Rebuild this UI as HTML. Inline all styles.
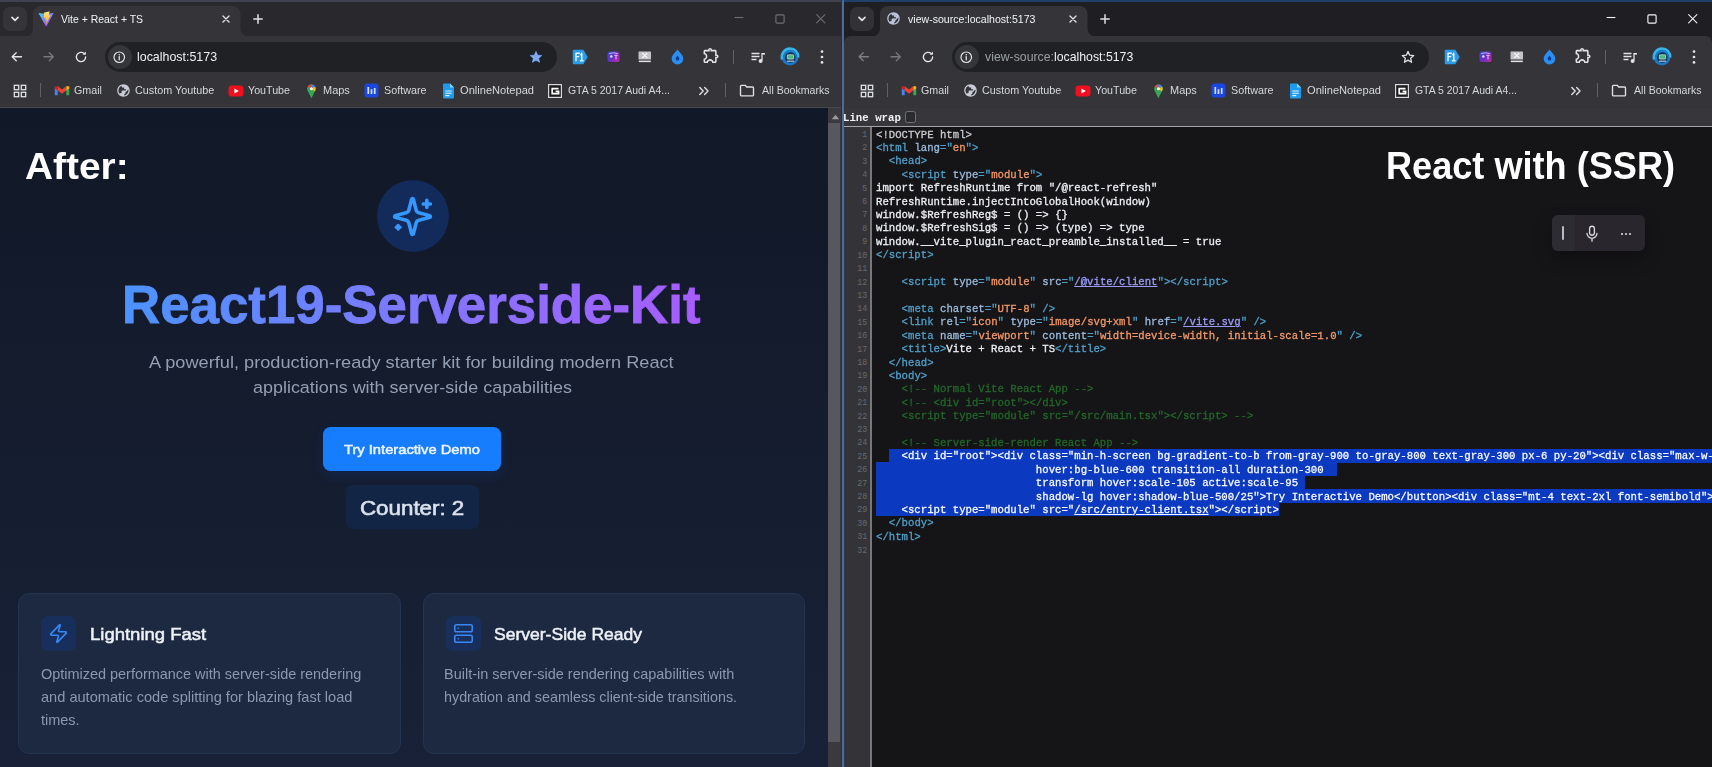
<!DOCTYPE html>
<html lang="en">
<head>
<meta charset="utf-8">
<title>React19-Serverside-Kit – SSR view-source comparison</title>
<style>
*{margin:0;padding:0;box-sizing:border-box}
html,body{width:1712px;height:767px;overflow:hidden;background:#202124}
body{font-family:"Liberation Sans",sans-serif;-webkit-font-smoothing:antialiased}
#root{position:relative;width:1712px;height:767px;overflow:hidden}
.b,.i,.t{position:absolute}
.i{display:block;overflow:visible}
.t{white-space:pre;transform-origin:0 50%;display:block}
.mo{font-family:"Liberation Mono",monospace}
.cl,.ln{position:absolute;white-space:pre;font-family:"Liberation Mono",monospace;height:13.41px;line-height:13.41px}
.cl{will-change:transform;-webkit-text-stroke:.3px;left:875.8px;font-size:10.667px;color:#eceef2;width:836.2px;overflow:hidden}
.ln{left:844px;width:23.3px;text-align:right;font-size:8.3px;color:#68696e;line-height:15.6px}
.tg{color:#509fc8}.an{color:#9bbbdc}.av{color:#f29766}.lk{color:#9a9cf8;text-decoration:underline}
.cm{color:#22672a}.dt{color:#c9cacd}.se{color:#f6f8ff}

</style>
</head>
<body>
<div id="root">
<div class="b" style="left:0px;top:0px;width:842px;height:36px;background:#29282c;"></div>
<div class="b" style="left:0px;top:0px;width:842px;height:2.3px;background:#40424f;"></div>
<div class="b" style="left:0px;top:35.5px;width:842px;height:72.5px;background:#353539;"></div>
<div class="b" style="left:2.5px;top:6.8px;width:24px;height:24.4px;background:#353438;border-radius:7px"></div>
<svg class="i" style="left:8.60px;top:12.50px" width="12" height="12" viewBox="0 0 12 12" ><path d="M3 4.400 6 7.400 9 4.400" fill="none" stroke="#e3e3e3" stroke-width="1.7" stroke-linecap="round" stroke-linejoin="round"/></svg>
<svg class="i" style="left:24.5px;top:5.500px" width="223.5" height="30.500" viewBox="0 0 223.5 30.500"><path d="M0 30.500a8 8 0 0 0 8-8V8a8 8 0 0 1 8-8h191.500a8 8 0 0 1 8 8v14.500a8 8 0 0 0 8 8z" fill="#353539"/></svg>
<svg class="i" style="left:38.00px;top:10.50px" width="16" height="16" viewBox="0 0 16 16" ><defs><linearGradient id="vg1" x1="0" y1="0" x2="1" y2="1"><stop offset="0" stop-color="#41d1ff"/><stop offset="1" stop-color="#bd34fe"/></linearGradient><linearGradient id="vg2" x1="0" y1="0" x2="0" y2="1"><stop offset="0" stop-color="#ffea83"/><stop offset="1" stop-color="#ffa800"/></linearGradient></defs><path d="M15.4 2.6 8.6 15a.5.5 0 0 1-.9 0L.7 2.6c-.2-.4.1-.8.5-.7l6.9 1.2h.2l6.7-1.2c.4-.1.7.3.4.7z" fill="url(#vg1)"/><path d="M11.3.4 6.300 1.400a.2.2 0 0 0-.15.17l-.3 5.300c0 .13.1.23.23.2l1.400-.33c.14-.03.260.09.230.23l-.420 2.070c-.03.140.100.260.24.220l.880-.270c.140-.04.270.08.240.22l-.670 3.240c-.04.2.230.310.340.140l.080-.120 4.170-8.320c.07-.14-.05-.3-.2-.27l-1.470.28c-.14.030-.260-.100-.220-.240l.960-3.320c.040-.140-.080-.270-.220-.240z" fill="url(#vg2)"/></svg>
<span class="t" style="left:61.25px;top:11.53px;font-size:10.6px;line-height:15px;color:#f1f3f4;transform:scaleX(0.9857);">Vite + React + TS</span>
<svg class="i" style="left:220.50px;top:13.50px" width="10" height="10" viewBox="0 0 10 10" ><path d="M2 2 8 8M8 2 2 8" fill="none" stroke="#dfe1e5" stroke-width="1.4" stroke-linecap="round"/></svg>
<svg class="i" style="left:250.50px;top:11.50px" width="14" height="14" viewBox="0 0 14 14" ><path d="M7 2.800V11.200M2.800 7H11.200" fill="none" stroke="#dfe1e5" stroke-width="1.500" stroke-linecap="round"/></svg>
<svg class="i" style="left:733.30px;top:11.30px" width="12" height="12" viewBox="0 0 12 12" ><path d="M1.600 6.500H10.400" stroke="#6e6f74" stroke-width="1.100"/></svg>
<svg class="i" style="left:774.00px;top:12.50px" width="12" height="12" viewBox="0 0 12 12" ><rect x="1.900" y="1.900" width="8.200" height="8.200" rx="1" fill="none" stroke="#6e6f74" stroke-width="1.150"/></svg>
<svg class="i" style="left:815.25px;top:12.75px" width="11.5" height="11.5" viewBox="0 0 14 14" ><path d="M2 2 12 12M12 2 2 12" stroke="#6e6f74" stroke-width="1.3" stroke-linecap="round"/></svg>
<svg class="i" style="left:10.25px;top:50.25px" width="13.5" height="13.5" viewBox="0 0 16 16" ><path d="M13.6 8H3M7.4 3.2 2.600 8l4.800 4.800" fill="none" stroke="#e3e5e8" stroke-width="1.600" stroke-linecap="round" stroke-linejoin="round"/></svg>
<svg class="i" style="left:41.75px;top:50.25px" width="13.5" height="13.5" viewBox="0 0 16 16" ><path d="M2.400 8H13M8.600 3.2 13.400 8l-4.800 4.800" fill="none" stroke="#77797e" stroke-width="1.600" stroke-linecap="round" stroke-linejoin="round"/></svg>
<svg class="i" style="left:74.00px;top:50.00px" width="14" height="14" viewBox="0 0 16 16" ><path d="M13.300 8a5.300 5.300 0 1 1-1.700-3.900" fill="none" stroke="#e3e5e8" stroke-width="1.600" stroke-linecap="round"/><path d="M13.600 1.800v3.700H9.900z" fill="#e3e5e8"/></svg>
<div class="b" style="left:105px;top:42px;width:452px;height:30px;background:#202124;border-radius:15px"></div>
<div class="b" style="left:108px;top:45px;width:24px;height:24px;background:#35363a;border-radius:12px"></div>
<svg class="i" style="left:111.75px;top:49.75px" width="14.5" height="14.5" viewBox="0 0 16 16" ><circle cx="8" cy="8" r="5.800" fill="none" stroke="#e3e5e8" stroke-width="1.300"/><path d="M8 7.300v3.500" stroke="#e3e5e8" stroke-width="1.400" stroke-linecap="round"/><circle cx="8" cy="5.200" r=".85" fill="#e3e5e8"/></svg>
<span class="t" style="left:136.96px;top:48.50px;font-size:12.4px;line-height:17px;color:#eef0f2;transform:scaleX(1.0022);">localhost:5173</span>
<svg class="i" style="left:528.80px;top:49.80px" width="14" height="14" viewBox="0 0 16 16" ><path d="M8 1.600 9.900 5.900l4.700.45-3.550 3.100 1.050 4.600L8 11.600l-4.100 2.450 1.050-4.600L1.400 6.350l4.700-.45z" fill="#7cacf8" stroke="#7cacf8" stroke-width=".8" stroke-linejoin="round"/></svg>
<svg class="i" style="left:571.80px;top:48.50px" width="16" height="16" viewBox="0 0 16 16" ><path d="M1.500 1.500h9.300l4 6.500-4 6.500H1.500z" fill="#2c9be6" stroke="#2c9be6" stroke-width="1.500" stroke-linejoin="round"/><path d="M4 4.300h3.300M4 7.600h2.700M4 4.300v7.400M9.800 4.300v7.400M8.500 11.700h2.600M8.700 5.800l1.100-1.500" fill="none" stroke="#e9f5ff" stroke-width="1.400" stroke-linecap="round"/></svg>
<svg class="i" style="left:607.00px;top:50.75px" width="13" height="11.5" viewBox="0 0 13 11.500" ><defs><linearGradient id="pg" x1="0" y1="0" x2="1" y2=".8"><stop offset="0" stop-color="#3553d6"/><stop offset=".55" stop-color="#6b2fc4"/><stop offset="1" stop-color="#b32aa6"/></linearGradient></defs><rect x=".5" y=".5" width="12" height="10.500" rx="2.600" fill="url(#pg)"/><path d="M2.200 2.600Q6.500 .9 10.800 2.600" fill="none" stroke="#c9c4f0" stroke-width=".9"/><circle cx="4.300" cy="5.500" r="1.300" fill="#dcd8ff"/><path d="M7.300 4.300h3.400M9 4.300v4.200" stroke="#e9a6e0" stroke-width="1.200"/></svg>
<svg class="i" style="left:638.45px;top:51.05px" width="13.5" height="11.5" viewBox="0 0 13.500 11.500" ><rect x=".5" y=".5" width="12.500" height="8" rx=".6" fill="#c3c4c8"/><path d="M4.300 1.800l5 5.200M9.300 1.800l-5 5.200" stroke="#fafafa" stroke-width="1.100"/><rect x=".8" y="9.600" width="12" height="1.500" fill="#e6e7ea"/></svg>
<svg class="i" style="left:671.10px;top:49.20px" width="13" height="16" viewBox="0 0 13 16" ><path d="M6.500 .5C4 3.700 .7 6.300 .7 9.700a5.800 5.800 0 0 0 11.600 0C12.300 6.300 9 3.700 6.500 .5z" fill="#2a8ff0"/><path d="M6.500 6.500c-1 1.300-1.900 2.100-1.900 3.200a1.900 1.900 0 0 0 3.800 0c0-1.100-.9-1.900-1.900-3.200z" fill="#0f3f9a"/></svg>
<svg class="i" style="left:701.55px;top:46.35px" width="18.5" height="18.5" viewBox="0 0 24 24" ><path d="M10.5 4.500c.28 0 .5.220.5.5v2h6v6h2c.28 0 .5.220.5.5s-.220.5-.5.5h-2v6h-2.120c-.68-1.750-2.390-3-4.380-3s-3.700 1.250-4.380 3H4v-2.120c1.750-.68 3-2.390 3-4.380 0-1.990-1.240-3.700-2.990-4.380L4 7h6V5c0-.28.220-.5.5-.5m0-2C9.120 2.500 8 3.620 8 5H4c-1.100 0-1.990.9-1.990 2v3.800h.29c1.490 0 2.700 1.210 2.700 2.700s-1.210 2.700-2.700 2.700H2V20c0 1.100.9 2 2 2h3.800v-.3c0-1.490 1.210-2.700 2.700-2.700s2.700 1.210 2.700 2.700v.3H17c1.100 0 2-.9 2-2v-4c1.380 0 2.500-1.120 2.500-2.500S20.380 11 19 11V7c0-1.100-.9-2-2-2h-4c0-1.380-1.120-2.500-2.500-2.500z" fill="#e3e3e3" fill-rule="evenodd"/></svg>
<div class="b" style="left:733px;top:50px;width:1.3px;height:14px;background:#5f6166;"></div>
<svg class="i" style="left:749.50px;top:49.50px" width="16" height="14" viewBox="0 0 16 14" ><path d="M1.500 3.500h8M1.500 6.500h8M1.500 9.500h5" stroke="#e3e3e3" stroke-width="1.400"/><path d="M12 3v7.300" stroke="#e3e3e3" stroke-width="1.300"/><path d="M12 3h3v1.600h-3z" fill="#e3e3e3"/><circle cx="10.600" cy="10.900" r="2" fill="#e3e3e3"/></svg>
<svg class="i" style="left:781.20px;top:47.80px" width="18" height="18" viewBox="0 0 18 18" ><circle cx="9" cy="9" r="8.500" fill="#1b78c9"/><path d="M1.200 11.500A8.300 8.300 0 0 1 9 .5a8.300 8.300 0 0 1 8.300 9" fill="none" stroke="#35b5e8" stroke-width="2.400"/><circle cx="9.300" cy="9.500" r="5.300" fill="#0e2f4d"/><rect x="6.300" y="6.800" width="6.400" height="4.300" rx=".6" fill="#49b87d" stroke="#d9e9f0" stroke-width=".7"/><path d="M6 13.200h7.200" stroke="#c9d6dd" stroke-width="1.100"/></svg>
<svg class="i" style="left:819.00px;top:49.00px" width="6" height="16" viewBox="0 0 6 16" ><circle cx="3" cy="2.600" r="1.350" fill="#e3e3e3"/><circle cx="3" cy="8" r="1.350" fill="#e3e3e3"/><circle cx="3" cy="13.400" r="1.350" fill="#e3e3e3"/></svg>
<svg class="i" style="left:13.00px;top:83.50px" width="14" height="14" viewBox="0 0 14 14" ><rect x="1.3" y="1.3" width="4.400" height="4.400" fill="none" stroke="#dfe1e5" stroke-width="1.300"/><rect x="1.3" y="8.3" width="4.400" height="4.400" fill="none" stroke="#dfe1e5" stroke-width="1.300"/><rect x="8.3" y="1.3" width="4.400" height="4.400" fill="none" stroke="#dfe1e5" stroke-width="1.300"/><rect x="8.3" y="8.3" width="4.400" height="4.400" fill="none" stroke="#dfe1e5" stroke-width="1.300"/></svg>
<div class="b" style="left:40px;top:83px;width:1.2px;height:14px;background:#5f6166;"></div>
<svg class="i" style="left:53.50px;top:84.00px" width="16" height="13" viewBox="0 0 16 13" ><path d="M.8 2.600v8.600h2.900V5.400z" fill="#4285f4"/><path d="M15.200 2.600v8.600h-2.900V5.400z" fill="#34a853"/><path d="M12.300 1.900 15.200 2.600v1.900l-2.900 2.100z" fill="#fbbc04"/><path d="M3.700 1.900.8 2.600v1.900l2.900 2.100z" fill="#c5221f"/><path d="M3.700 6.400V2.300L8 5.600l4.300-3.300v4.100L8 9.700z" fill="#ea4335"/></svg>
<span class="t" style="left:73.76px;top:82.86px;font-size:10.5px;line-height:15px;color:#d5d8dd;transform:scaleX(1.0195);">Gmail</span>
<svg class="i" style="left:115.70px;top:83.00px" width="15" height="15" viewBox="0 0 24 24" ><path transform="translate(24 0) scale(-1 1)" d="M12 2C6.480 2 2 6.480 2 12s4.480 10 10 10 10-4.480 10-10S17.520 2 12 2zm-1 17.930c-3.950-.490-7-3.850-7-7.930 0-.620.080-1.210.210-1.790L9 15v1c0 1.100.9 2 2 2v1.930zm6.900-2.540c-.260-.810-1-1.390-1.900-1.390h-1v-3c0-.550-.450-1-1-1H8v-2h2c.550 0 1-.450 1-1V7h2c1.100 0 2-.9 2-2v-.410c2.930 1.190 5 4.060 5 7.410 0 2.080-.8 3.970-2.100 5.390z" fill="#c9ccd6"/></svg>
<span class="t" style="left:135.05px;top:82.86px;font-size:10.5px;line-height:15px;color:#d5d8dd;transform:scaleX(1.0282);">Custom Youtube</span>
<svg class="i" style="left:227.50px;top:84.50px" width="16" height="12" viewBox="0 0 16 12" ><rect x=".5" y=".5" width="15" height="11" rx="3.200" fill="#f00f1f"/><path d="M6.400 3.400v5.200L10.800 6z" fill="#fff"/></svg>
<span class="t" style="left:247.77px;top:82.86px;font-size:10.5px;line-height:15px;color:#d5d8dd;transform:scaleX(1.0181);">YouTube</span>
<svg class="i" style="left:304.60px;top:83.60px" width="12.8" height="14.6" viewBox="0 0 14 16" ><path d="M7 .5A4.700 4.700 0 0 0 2.300 5.200c0 1.200.4 2.100 1 3L7 15.500l3.700-7.300c.6-.9 1-1.800 1-3A4.700 4.700 0 0 0 7 .5z" fill="#34a853"/><path d="M7 .5A4.700 4.700 0 0 0 2.800 3.100L7 5.200z" fill="#ea4335"/><path d="M7 .5v4.700l4.200-2.100A4.700 4.700 0 0 0 7 .5z" fill="#4285f4"/><path d="M11.200 3.100 7 5.200l3.700 3c.6-.9 1-1.800 1-3 0-.8-.2-1.500-.5-2.100z" fill="#fbbc04"/><circle cx="7" cy="5.200" r="1.700" fill="#fff"/></svg>
<span class="t" style="left:323.40px;top:82.86px;font-size:10.5px;line-height:15px;color:#d5d8dd;transform:scaleX(1.0436);">Maps</span>
<svg class="i" style="left:364.00px;top:83.00px" width="15" height="15" viewBox="0 0 15 15" ><rect x=".5" y=".5" width="14" height="14" rx="3" fill="#1c46e0"/><path d="M4.300 4v7M7.500 6.300V11M10.700 5V11" stroke="#cfe0ff" stroke-width="1.700"/></svg>
<span class="t" style="left:384.01px;top:82.86px;font-size:10.5px;line-height:15px;color:#d5d8dd;transform:scaleX(1.0249);">Software</span>
<svg class="i" style="left:441.50px;top:82.50px" width="13" height="16" viewBox="0 0 13 16" ><path d="M1 1.500A1 1 0 0 1 2 .5h6l4 4v10a1 1 0 0 1-1 1H2a1 1 0 0 1-1-1z" fill="#1d9bf0"/><path d="M8 .5v4h4z" fill="#8fd0ff"/><path d="M3.300 8h6.400M3.300 10.300h6.400M3.300 12.600h4" stroke="#e6f5ff" stroke-width="1.100"/></svg>
<span class="t" style="left:459.97px;top:82.86px;font-size:10.5px;line-height:15px;color:#d5d8dd;transform:scaleX(1.0570);">OnlineNotepad</span>
<svg class="i" style="left:548.30px;top:83.50px" width="14" height="14" viewBox="0 0 14 14" ><rect x=".6" y=".6" width="12.800" height="12.800" fill="#1b1b1d" stroke="#d9d9d9" stroke-width="1.200"/><path d="M10.600 4.600H4.200v5h6.400V7.300H7.600" fill="none" stroke="#fff" stroke-width="1.700"/></svg>
<span class="t" style="left:567.77px;top:82.86px;font-size:10.5px;line-height:15px;color:#d5d8dd;transform:scaleX(0.9942);">GTA 5 2017 Audi A4...</span>
<svg class="i" style="left:698.00px;top:85.80px" width="12" height="10" viewBox="0 0 12 10" ><path d="M1.800 1.500 5.200 5 1.800 8.500M6.600 1.500 10 5 6.600 8.500" fill="none" stroke="#dfe1e5" stroke-width="1.400" stroke-linecap="round" stroke-linejoin="round"/></svg>
<div class="b" style="left:724.5px;top:83px;width:1.2px;height:14px;background:#5f6166;"></div>
<svg class="i" style="left:739.00px;top:84.00px" width="16" height="13" viewBox="0 0 16 13" ><path d="M1.500 2.200c0-.5.400-.9.900-.9h3.800l1.500 1.700h5.900c.5 0 .9.400.9.900v7c0 .5-.4.900-.9.900H2.400c-.5 0-.9-.4-.9-.9z" fill="none" stroke="#dfe1e5" stroke-width="1.350" stroke-linejoin="round"/></svg>
<span class="t" style="left:761.68px;top:82.86px;font-size:10.5px;line-height:15px;color:#d5d8dd;transform:scaleX(1.0060);">All Bookmarks</span>
<div class="b" style="left:844px;top:0px;width:868px;height:36px;background:#1f1f23;"></div>
<div class="b" style="left:844px;top:0px;width:868px;height:2.3px;background:#1f406b;"></div>
<div class="b" style="left:844px;top:35.5px;width:868px;height:72.5px;background:#353539;border-radius:7px 7px 0 0"></div>
<div class="b" style="left:849.5px;top:6.8px;width:24px;height:24.4px;background:#323236;border-radius:7px"></div>
<svg class="i" style="left:855.60px;top:12.50px" width="12" height="12" viewBox="0 0 12 12" ><path d="M3 4.400 6 7.400 9 4.400" fill="none" stroke="#e3e3e3" stroke-width="1.7" stroke-linecap="round" stroke-linejoin="round"/></svg>
<svg class="i" style="left:871.5px;top:5.500px" width="223.5" height="30.500" viewBox="0 0 223.5 30.500"><path d="M0 30.500a8 8 0 0 0 8-8V8a8 8 0 0 1 8-8h191.500a8 8 0 0 1 8 8v14.500a8 8 0 0 0 8 8z" fill="#353539"/></svg>
<svg class="i" style="left:886.40px;top:10.80px" width="15" height="15" viewBox="0 0 24 24" ><path transform="translate(24 0) scale(-1 1)" d="M12 2C6.480 2 2 6.480 2 12s4.480 10 10 10 10-4.480 10-10S17.520 2 12 2zm-1 17.930c-3.950-.490-7-3.850-7-7.930 0-.620.080-1.210.210-1.790L9 15v1c0 1.100.9 2 2 2v1.930zm6.900-2.540c-.260-.810-1-1.390-1.900-1.390h-1v-3c0-.550-.450-1-1-1H8v-2h2c.550 0 1-.450 1-1V7h2c1.100 0 2-.9 2-2v-.410c2.930 1.190 5 4.060 5 7.410 0 2.080-.8 3.970-2.100 5.390z" fill="#bcc3d8"/></svg>
<span class="t" style="left:908.26px;top:11.53px;font-size:10.6px;line-height:15px;color:#f1f3f4;transform:scaleX(0.9978);">view-source:localhost:5173</span>
<svg class="i" style="left:1067.50px;top:13.50px" width="10" height="10" viewBox="0 0 10 10" ><path d="M2 2 8 8M8 2 2 8" fill="none" stroke="#dfe1e5" stroke-width="1.4" stroke-linecap="round"/></svg>
<svg class="i" style="left:1097.50px;top:11.50px" width="14" height="14" viewBox="0 0 14 14" ><path d="M7 2.800V11.200M2.800 7H11.200" fill="none" stroke="#dfe1e5" stroke-width="1.500" stroke-linecap="round"/></svg>
<svg class="i" style="left:1605.30px;top:11.30px" width="12" height="12" viewBox="0 0 12 12" ><path d="M1.600 6.500H10.400" stroke="#f1f3f4" stroke-width="1.100"/></svg>
<svg class="i" style="left:1646.00px;top:12.50px" width="12" height="12" viewBox="0 0 12 12" ><rect x="1.900" y="1.900" width="8.200" height="8.200" rx="1" fill="none" stroke="#f1f3f4" stroke-width="1.150"/></svg>
<svg class="i" style="left:1687.25px;top:12.75px" width="11.5" height="11.5" viewBox="0 0 14 14" ><path d="M2 2 12 12M12 2 2 12" stroke="#f1f3f4" stroke-width="1.3" stroke-linecap="round"/></svg>
<svg class="i" style="left:857.25px;top:50.25px" width="13.5" height="13.5" viewBox="0 0 16 16" ><path d="M13.6 8H3M7.4 3.2 2.600 8l4.800 4.800" fill="none" stroke="#7d7f84" stroke-width="1.600" stroke-linecap="round" stroke-linejoin="round"/></svg>
<svg class="i" style="left:888.75px;top:50.25px" width="13.5" height="13.5" viewBox="0 0 16 16" ><path d="M2.400 8H13M8.600 3.2 13.400 8l-4.800 4.800" fill="none" stroke="#77797e" stroke-width="1.600" stroke-linecap="round" stroke-linejoin="round"/></svg>
<svg class="i" style="left:921.00px;top:50.00px" width="14" height="14" viewBox="0 0 16 16" ><path d="M13.300 8a5.300 5.300 0 1 1-1.700-3.900" fill="none" stroke="#e3e5e8" stroke-width="1.600" stroke-linecap="round"/><path d="M13.600 1.800v3.700H9.900z" fill="#e3e5e8"/></svg>
<div class="b" style="left:952px;top:42px;width:477px;height:30px;background:#202124;border-radius:15px"></div>
<div class="b" style="left:955px;top:45px;width:24px;height:24px;background:#35363a;border-radius:12px"></div>
<svg class="i" style="left:958.75px;top:49.75px" width="14.5" height="14.5" viewBox="0 0 16 16" ><circle cx="8" cy="8" r="5.800" fill="none" stroke="#e3e5e8" stroke-width="1.300"/><path d="M8 7.300v3.500" stroke="#e3e5e8" stroke-width="1.400" stroke-linecap="round"/><circle cx="8" cy="5.200" r=".85" fill="#e3e5e8"/></svg>
<span class="t" style="left:984.76px;top:48.50px;font-size:12.4px;line-height:17px;color:#eef0f2;transform:scaleX(0.9921);"><span style="color:#9aa0a6">view-source:</span>localhost:5173</span>
<svg class="i" style="left:1401.00px;top:49.80px" width="14" height="14" viewBox="0 0 16 16" ><path d="M8 1.600 9.900 5.900l4.700.45-3.550 3.100 1.050 4.600L8 11.600l-4.100 2.450 1.050-4.600L1.400 6.350l4.700-.45z" fill="none" stroke="#e3e3e3" stroke-width="1.450" stroke-linejoin="round"/></svg>
<svg class="i" style="left:1443.80px;top:48.50px" width="16" height="16" viewBox="0 0 16 16" ><path d="M1.500 1.500h9.300l4 6.500-4 6.500H1.500z" fill="#2c9be6" stroke="#2c9be6" stroke-width="1.500" stroke-linejoin="round"/><path d="M4 4.300h3.300M4 7.600h2.700M4 4.300v7.400M9.800 4.300v7.400M8.500 11.700h2.600M8.700 5.800l1.100-1.500" fill="none" stroke="#e9f5ff" stroke-width="1.400" stroke-linecap="round"/></svg>
<svg class="i" style="left:1479.00px;top:50.75px" width="13" height="11.5" viewBox="0 0 13 11.500" ><defs><linearGradient id="pg" x1="0" y1="0" x2="1" y2=".8"><stop offset="0" stop-color="#3553d6"/><stop offset=".55" stop-color="#6b2fc4"/><stop offset="1" stop-color="#b32aa6"/></linearGradient></defs><rect x=".5" y=".5" width="12" height="10.500" rx="2.600" fill="url(#pg)"/><path d="M2.200 2.600Q6.500 .9 10.800 2.600" fill="none" stroke="#c9c4f0" stroke-width=".9"/><circle cx="4.300" cy="5.500" r="1.300" fill="#dcd8ff"/><path d="M7.300 4.300h3.400M9 4.300v4.200" stroke="#e9a6e0" stroke-width="1.200"/></svg>
<svg class="i" style="left:1510.45px;top:51.05px" width="13.5" height="11.5" viewBox="0 0 13.500 11.500" ><rect x=".5" y=".5" width="12.500" height="8" rx=".6" fill="#c3c4c8"/><path d="M4.300 1.800l5 5.200M9.300 1.800l-5 5.200" stroke="#fafafa" stroke-width="1.100"/><rect x=".8" y="9.600" width="12" height="1.500" fill="#e6e7ea"/></svg>
<svg class="i" style="left:1543.10px;top:49.20px" width="13" height="16" viewBox="0 0 13 16" ><path d="M6.500 .5C4 3.700 .7 6.300 .7 9.700a5.800 5.800 0 0 0 11.600 0C12.300 6.300 9 3.700 6.500 .5z" fill="#2a8ff0"/><path d="M6.500 6.500c-1 1.300-1.900 2.100-1.900 3.200a1.900 1.900 0 0 0 3.800 0c0-1.100-.9-1.900-1.900-3.200z" fill="#0f3f9a"/></svg>
<svg class="i" style="left:1573.55px;top:46.35px" width="18.5" height="18.5" viewBox="0 0 24 24" ><path d="M10.5 4.500c.28 0 .5.220.5.5v2h6v6h2c.28 0 .5.220.5.5s-.220.5-.5.5h-2v6h-2.120c-.68-1.750-2.390-3-4.380-3s-3.700 1.250-4.380 3H4v-2.120c1.750-.68 3-2.390 3-4.380 0-1.990-1.240-3.700-2.990-4.380L4 7h6V5c0-.28.220-.5.5-.5m0-2C9.120 2.500 8 3.620 8 5H4c-1.100 0-1.990.9-1.990 2v3.800h.29c1.490 0 2.700 1.210 2.700 2.700s-1.210 2.700-2.700 2.700H2V20c0 1.100.9 2 2 2h3.800v-.3c0-1.490 1.210-2.700 2.700-2.700s2.700 1.210 2.700 2.700v.3H17c1.100 0 2-.9 2-2v-4c1.380 0 2.500-1.120 2.500-2.500S20.380 11 19 11V7c0-1.100-.9-2-2-2h-4c0-1.380-1.120-2.500-2.500-2.500z" fill="#e3e3e3" fill-rule="evenodd"/></svg>
<div class="b" style="left:1605px;top:50px;width:1.3px;height:14px;background:#5f6166;"></div>
<svg class="i" style="left:1621.50px;top:49.50px" width="16" height="14" viewBox="0 0 16 14" ><path d="M1.500 3.500h8M1.500 6.500h8M1.500 9.500h5" stroke="#e3e3e3" stroke-width="1.400"/><path d="M12 3v7.300" stroke="#e3e3e3" stroke-width="1.300"/><path d="M12 3h3v1.600h-3z" fill="#e3e3e3"/><circle cx="10.600" cy="10.900" r="2" fill="#e3e3e3"/></svg>
<svg class="i" style="left:1653.20px;top:47.80px" width="18" height="18" viewBox="0 0 18 18" ><circle cx="9" cy="9" r="8.500" fill="#1b78c9"/><path d="M1.200 11.500A8.300 8.300 0 0 1 9 .5a8.300 8.300 0 0 1 8.300 9" fill="none" stroke="#35b5e8" stroke-width="2.400"/><circle cx="9.300" cy="9.500" r="5.300" fill="#0e2f4d"/><rect x="6.300" y="6.800" width="6.400" height="4.300" rx=".6" fill="#49b87d" stroke="#d9e9f0" stroke-width=".7"/><path d="M6 13.200h7.200" stroke="#c9d6dd" stroke-width="1.100"/></svg>
<svg class="i" style="left:1691.00px;top:49.00px" width="6" height="16" viewBox="0 0 6 16" ><circle cx="3" cy="2.600" r="1.350" fill="#e3e3e3"/><circle cx="3" cy="8" r="1.350" fill="#e3e3e3"/><circle cx="3" cy="13.400" r="1.350" fill="#e3e3e3"/></svg>
<svg class="i" style="left:860.00px;top:83.50px" width="14" height="14" viewBox="0 0 14 14" ><rect x="1.3" y="1.3" width="4.400" height="4.400" fill="none" stroke="#dfe1e5" stroke-width="1.300"/><rect x="1.3" y="8.3" width="4.400" height="4.400" fill="none" stroke="#dfe1e5" stroke-width="1.300"/><rect x="8.3" y="1.3" width="4.400" height="4.400" fill="none" stroke="#dfe1e5" stroke-width="1.300"/><rect x="8.3" y="8.3" width="4.400" height="4.400" fill="none" stroke="#dfe1e5" stroke-width="1.300"/></svg>
<div class="b" style="left:887px;top:83px;width:1.2px;height:14px;background:#5f6166;"></div>
<svg class="i" style="left:900.50px;top:84.00px" width="16" height="13" viewBox="0 0 16 13" ><path d="M.8 2.600v8.600h2.900V5.400z" fill="#4285f4"/><path d="M15.200 2.600v8.600h-2.900V5.400z" fill="#34a853"/><path d="M12.300 1.900 15.200 2.600v1.900l-2.900 2.100z" fill="#fbbc04"/><path d="M3.700 1.900.8 2.600v1.900l2.900 2.100z" fill="#c5221f"/><path d="M3.700 6.400V2.300L8 5.600l4.300-3.300v4.100L8 9.700z" fill="#ea4335"/></svg>
<span class="t" style="left:920.76px;top:82.86px;font-size:10.5px;line-height:15px;color:#d5d8dd;transform:scaleX(1.0195);">Gmail</span>
<svg class="i" style="left:962.70px;top:83.00px" width="15" height="15" viewBox="0 0 24 24" ><path transform="translate(24 0) scale(-1 1)" d="M12 2C6.480 2 2 6.480 2 12s4.480 10 10 10 10-4.480 10-10S17.520 2 12 2zm-1 17.930c-3.950-.490-7-3.850-7-7.930 0-.620.080-1.210.210-1.790L9 15v1c0 1.100.9 2 2 2v1.930zm6.900-2.540c-.260-.810-1-1.390-1.900-1.390h-1v-3c0-.550-.450-1-1-1H8v-2h2c.550 0 1-.450 1-1V7h2c1.100 0 2-.9 2-2v-.410c2.930 1.190 5 4.060 5 7.410 0 2.080-.8 3.970-2.100 5.390z" fill="#c9ccd6"/></svg>
<span class="t" style="left:982.05px;top:82.86px;font-size:10.5px;line-height:15px;color:#d5d8dd;transform:scaleX(1.0282);">Custom Youtube</span>
<svg class="i" style="left:1074.50px;top:84.50px" width="16" height="12" viewBox="0 0 16 12" ><rect x=".5" y=".5" width="15" height="11" rx="3.200" fill="#f00f1f"/><path d="M6.400 3.400v5.200L10.800 6z" fill="#fff"/></svg>
<span class="t" style="left:1094.77px;top:82.86px;font-size:10.5px;line-height:15px;color:#d5d8dd;transform:scaleX(1.0181);">YouTube</span>
<svg class="i" style="left:1151.60px;top:83.60px" width="12.8" height="14.6" viewBox="0 0 14 16" ><path d="M7 .5A4.700 4.700 0 0 0 2.300 5.200c0 1.200.4 2.100 1 3L7 15.500l3.700-7.300c.6-.9 1-1.800 1-3A4.700 4.700 0 0 0 7 .5z" fill="#34a853"/><path d="M7 .5A4.700 4.700 0 0 0 2.800 3.100L7 5.200z" fill="#ea4335"/><path d="M7 .5v4.700l4.200-2.100A4.700 4.700 0 0 0 7 .5z" fill="#4285f4"/><path d="M11.200 3.100 7 5.200l3.700 3c.6-.9 1-1.800 1-3 0-.8-.2-1.500-.5-2.100z" fill="#fbbc04"/><circle cx="7" cy="5.200" r="1.700" fill="#fff"/></svg>
<span class="t" style="left:1170.40px;top:82.86px;font-size:10.5px;line-height:15px;color:#d5d8dd;transform:scaleX(1.0436);">Maps</span>
<svg class="i" style="left:1211.00px;top:83.00px" width="15" height="15" viewBox="0 0 15 15" ><rect x=".5" y=".5" width="14" height="14" rx="3" fill="#1c46e0"/><path d="M4.300 4v7M7.500 6.300V11M10.700 5V11" stroke="#cfe0ff" stroke-width="1.700"/></svg>
<span class="t" style="left:1231.01px;top:82.86px;font-size:10.5px;line-height:15px;color:#d5d8dd;transform:scaleX(1.0249);">Software</span>
<svg class="i" style="left:1288.50px;top:82.50px" width="13" height="16" viewBox="0 0 13 16" ><path d="M1 1.500A1 1 0 0 1 2 .5h6l4 4v10a1 1 0 0 1-1 1H2a1 1 0 0 1-1-1z" fill="#1d9bf0"/><path d="M8 .5v4h4z" fill="#8fd0ff"/><path d="M3.300 8h6.400M3.300 10.300h6.400M3.300 12.600h4" stroke="#e6f5ff" stroke-width="1.100"/></svg>
<span class="t" style="left:1306.97px;top:82.86px;font-size:10.5px;line-height:15px;color:#d5d8dd;transform:scaleX(1.0570);">OnlineNotepad</span>
<svg class="i" style="left:1395.30px;top:83.50px" width="14" height="14" viewBox="0 0 14 14" ><rect x=".6" y=".6" width="12.800" height="12.800" fill="#1b1b1d" stroke="#d9d9d9" stroke-width="1.200"/><path d="M10.600 4.600H4.200v5h6.400V7.300H7.600" fill="none" stroke="#fff" stroke-width="1.700"/></svg>
<span class="t" style="left:1414.77px;top:82.86px;font-size:10.5px;line-height:15px;color:#d5d8dd;transform:scaleX(0.9942);">GTA 5 2017 Audi A4...</span>
<svg class="i" style="left:1570.00px;top:85.80px" width="12" height="10" viewBox="0 0 12 10" ><path d="M1.800 1.500 5.200 5 1.800 8.500M6.600 1.500 10 5 6.600 8.500" fill="none" stroke="#dfe1e5" stroke-width="1.400" stroke-linecap="round" stroke-linejoin="round"/></svg>
<div class="b" style="left:1596.5px;top:83px;width:1.2px;height:14px;background:#5f6166;"></div>
<svg class="i" style="left:1611.00px;top:84.00px" width="16" height="13" viewBox="0 0 16 13" ><path d="M1.500 2.200c0-.5.400-.9.900-.9h3.800l1.500 1.700h5.900c.5 0 .9.400.9.900v7c0 .5-.4.900-.9.900H2.400c-.5 0-.9-.4-.9-.9z" fill="none" stroke="#dfe1e5" stroke-width="1.350" stroke-linejoin="round"/></svg>
<span class="t" style="left:1633.68px;top:82.86px;font-size:10.5px;line-height:15px;color:#d5d8dd;transform:scaleX(1.0060);">All Bookmarks</span>
<div class="b" style="left:0px;top:108px;width:828px;height:659px;background:linear-gradient(180deg,#111827 0%,#182137 100%);"></div>
<div class="b" style="left:0px;top:107px;width:842px;height:1px;background:#47484d;"></div>
<div class="b" style="left:827.8px;top:108px;width:14.2px;height:659px;background:#3a393d;"></div>
<div class="b" style="left:828.2px;top:123px;width:12.1px;height:619px;background:#57575e;"></div>
<svg class="i" style="left:830.5px;top:113.5px" width="9" height="6" viewBox="0 0 9 6"><path d="M4.500 .8 8.200 5.200H.8z" fill="#9b9b9e"/></svg>
<span class="t" style="left:25.33px;top:139.61px;font-size:37.5px;line-height:52px;color:#ffffff;font-weight:700;transform:scaleX(1.0361);">After:</span>
<div class="b" style="left:376.5px;top:180px;width:72px;height:72px;background:#132b5a;border-radius:50%"></div>
<svg class="i" style="left:390.700px;top:194.700px" width="43" height="43" viewBox="0 0 24 24" fill="none" stroke="#3498ff" stroke-width="2" stroke-linecap="round" stroke-linejoin="round"><path d="M9.937 15.500A2 2 0 0 0 8.500 14.063l-6.135-1.582a.5.5 0 0 1 0-.962L8.500 9.936A2 2 0 0 0 9.937 8.500l1.582-6.135a.5.5 0 0 1 .963 0L14.063 8.500A2 2 0 0 0 15.500 9.937l6.135 1.581a.5.5 0 0 1 0 .964L15.500 14.063a2 2 0 0 0-1.437 1.437l-1.582 6.135a.5.5 0 0 1-.963 0z"/><path d="M20 3v4M22 5h-4M4 17v2M5 18H3"/></svg>
<span class="t" style="left:122.27px;top:266.62px;font-size:54.5px;line-height:76px;color:transparent;font-weight:700;transform:scaleX(0.9694);background:linear-gradient(90deg,#4b93ff 0%,#7f78ff 50%,#a85cff 100%);-webkit-background-clip:text;background-clip:text;-webkit-text-stroke:.9px transparent;">React19-Serverside-Kit</span>
<span class="t" style="left:149.46px;top:351.47px;font-size:17.1px;line-height:24px;color:#949fb4;transform:scaleX(1.0640);">A powerful, production-ready starter kit for building modern React</span>
<span class="t" style="left:252.74px;top:376.47px;font-size:17.1px;line-height:24px;color:#949fb4;transform:scaleX(1.0489);">applications with server-side capabilities</span>
<div class="b" style="left:323px;top:427px;width:178.3px;height:43.8px;background:#177dff;border-radius:7.500px;box-shadow:0 5px 12px rgba(20,90,220,.16)"></div>
<span class="t" style="left:344.17px;top:440.42px;font-size:13.5px;line-height:19px;color:#eef5ff;transform:scaleX(1.0895);-webkit-text-stroke:.5px #eef5ff;">Try Interactive Demo</span>
<div class="b" style="left:346px;top:485.3px;width:132.5px;height:43.7px;background:#132544;border-radius:7px"></div>
<span class="t" style="left:359.87px;top:493.80px;font-size:20.2px;line-height:28px;color:#dbe2ee;transform:scaleX(1.1060);-webkit-text-stroke:.6px #dbe2ee;">Counter: 2</span>
<div class="b" style="left:18px;top:592.5px;width:383.3px;height:161.5px;background:#1c2941;border-radius:11px;border:1px solid #243350"></div>
<div class="b" style="left:40.5px;top:615.5px;width:35.5px;height:35px;background:#182f5c;border-radius:7px"></div>
<svg class="i" style="left:47.75px;top:622.500px" width="21" height="21" viewBox="0 0 24 24" fill="none" stroke="#3a86f2" stroke-width="1.850" stroke-linecap="round" stroke-linejoin="round"><path d="M4 14a1 1 0 0 1-.78-1.630l9.900-10.200a.5.5 0 0 1 .860.460l-1.920 6.020A1 1 0 0 0 13 10h7a1 1 0 0 1 .780 1.630l-9.900 10.200a.5.5 0 0 1-.860-.460l1.920-6.020A1 1 0 0 0 11 14z"/></svg>
<span class="t" style="left:89.68px;top:622.75px;font-size:16.6px;line-height:23px;color:#eef1f6;transform:scaleX(1.1143);-webkit-text-stroke:.5px #eef1f6;">Lightning Fast</span>
<span class="t" style="left:40.52px;top:663.68px;font-size:14.2px;line-height:20px;color:#8c98ad;transform:scaleX(1.0178);">Optimized performance with server-side rendering</span>
<span class="t" style="left:40.58px;top:686.98px;font-size:14.2px;line-height:20px;color:#8c98ad;transform:scaleX(1.0281);">and automatic code splitting for blazing fast load</span>
<span class="t" style="left:40.98px;top:710.28px;font-size:14.2px;line-height:20px;color:#8c98ad;transform:scaleX(1.0213);">times.</span>
<div class="b" style="left:423px;top:592.5px;width:382.3px;height:161.5px;background:#1c2941;border-radius:11px;border:1px solid #243350"></div>
<div class="b" style="left:445.5px;top:615.5px;width:35.5px;height:35px;background:#182f5c;border-radius:7px"></div>
<svg class="i" style="left:452.75px;top:622.500px" width="21" height="21" viewBox="0 0 24 24" fill="none" stroke="#3a86f2" stroke-width="1.850" stroke-linecap="round" stroke-linejoin="round"><rect width="20" height="8" x="2" y="2" rx="2" ry="2"/><rect width="20" height="8" x="2" y="14" rx="2" ry="2"/><path d="M6 6h.010M6 18h.010"/></svg>
<span class="t" style="left:494.20px;top:622.75px;font-size:16.6px;line-height:23px;color:#eef1f6;transform:scaleX(1.0559);-webkit-text-stroke:.5px #eef1f6;">Server-Side Ready</span>
<span class="t" style="left:444.01px;top:663.68px;font-size:14.2px;line-height:20px;color:#8c98ad;transform:scaleX(1.0199);">Built-in server-side rendering capabilities with</span>
<span class="t" style="left:444.21px;top:686.98px;font-size:14.2px;line-height:20px;color:#8c98ad;transform:scaleX(1.0100);">hydration and seamless client-side transitions.</span>
<div class="b" style="left:844px;top:108px;width:868px;height:18.5px;background:#37373b;"></div>
<span class="t mo" style="left:843.49px;top:110.76px;font-size:10.667px;line-height:15px;color:#f2f3f5;font-weight:700;transform:scaleX(1.0063);">Line wrap</span>
<div class="b" style="left:905px;top:111.3px;width:11.3px;height:11.3px;background:#2b2c30;border-radius:2.500px;border:1px solid #707176"></div>
<div class="b" style="left:844px;top:127px;width:868px;height:640px;background:#151517;"></div>
<div class="b" style="left:844px;top:126.2px;width:868px;height:1px;background:#a4a5a8;"></div>
<div class="b" style="left:844px;top:127px;width:26.5px;height:640px;background:#343438;"></div>
<div class="b" style="left:870.4px;top:127px;width:1.5px;height:640px;background:#77787c;"></div>
<div class="b" style="left:888.8px;top:448.84px;width:823.2px;height:13.71px;background:#0b39c0;"></div>
<div class="b" style="left:875.8px;top:462.25px;width:461.2px;height:13.71px;background:#0b39c0;"></div>
<div class="b" style="left:875.8px;top:475.66px;width:429.2px;height:13.71px;background:#0b39c0;"></div>
<div class="b" style="left:875.8px;top:489.07px;width:836.2px;height:13.71px;background:#0b39c0;"></div>
<div class="b" style="left:875.8px;top:502.48px;width:403.7px;height:13.71px;background:#0b39c0;"></div>
<div class="ln" style="top:127.00px">1</div>
<div class="cl" style="top:128.60px"><span class="dt">&lt;!DOCTYPE html&gt;</span></div>
<div class="ln" style="top:140.41px">2</div>
<div class="cl" style="top:142.01px"><span class="tg">&lt;html</span><span class="tg"> </span><span class="an">lang</span><span class="tg">=&quot;</span><span class="av">en</span><span class="tg">&quot;</span><span class="tg">&gt;</span></div>
<div class="ln" style="top:153.82px">3</div>
<div class="cl" style="top:155.42px">  <span class="tg">&lt;head</span><span class="tg">&gt;</span></div>
<div class="ln" style="top:167.23px">4</div>
<div class="cl" style="top:168.83px">    <span class="tg">&lt;script</span><span class="tg"> </span><span class="an">type</span><span class="tg">=&quot;</span><span class="av">module</span><span class="tg">&quot;</span><span class="tg">&gt;</span></div>
<div class="ln" style="top:180.64px">5</div>
<div class="cl" style="top:182.24px">import RefreshRuntime from &quot;/@react-refresh&quot;</div>
<div class="ln" style="top:194.05px">6</div>
<div class="cl" style="top:195.65px">RefreshRuntime.injectIntoGlobalHook(window)</div>
<div class="ln" style="top:207.46px">7</div>
<div class="cl" style="top:209.06px">window.$RefreshReg$ = () =&gt; {}</div>
<div class="ln" style="top:220.87px">8</div>
<div class="cl" style="top:222.47px">window.$RefreshSig$ = () =&gt; (type) =&gt; type</div>
<div class="ln" style="top:234.28px">9</div>
<div class="cl" style="top:235.88px">window.__vite_plugin_react_preamble_installed__ = true</div>
<div class="ln" style="top:247.69px">10</div>
<div class="cl" style="top:249.29px"><span class="tg">&lt;/script&gt;</span></div>
<div class="ln" style="top:261.10px">11</div>
<div class="ln" style="top:274.51px">12</div>
<div class="cl" style="top:276.11px">    <span class="tg">&lt;script</span><span class="tg"> </span><span class="an">type</span><span class="tg">=&quot;</span><span class="av">module</span><span class="tg">&quot;</span><span class="tg"> </span><span class="an">src</span><span class="tg">=&quot;</span><span class="lk">/@vite/client</span><span class="tg">&quot;</span><span class="tg">&gt;</span><span class="tg">&lt;/script&gt;</span></div>
<div class="ln" style="top:287.92px">13</div>
<div class="ln" style="top:301.33px">14</div>
<div class="cl" style="top:302.93px">    <span class="tg">&lt;meta</span><span class="tg"> </span><span class="an">charset</span><span class="tg">=&quot;</span><span class="av">UTF-8</span><span class="tg">&quot;</span><span class="tg"> /&gt;</span></div>
<div class="ln" style="top:314.74px">15</div>
<div class="cl" style="top:316.34px">    <span class="tg">&lt;link</span><span class="tg"> </span><span class="an">rel</span><span class="tg">=&quot;</span><span class="av">icon</span><span class="tg">&quot;</span><span class="tg"> </span><span class="an">type</span><span class="tg">=&quot;</span><span class="av">image/svg+xml</span><span class="tg">&quot;</span><span class="tg"> </span><span class="an">href</span><span class="tg">=&quot;</span><span class="lk">/vite.svg</span><span class="tg">&quot;</span><span class="tg"> /&gt;</span></div>
<div class="ln" style="top:328.15px">16</div>
<div class="cl" style="top:329.75px">    <span class="tg">&lt;meta</span><span class="tg"> </span><span class="an">name</span><span class="tg">=&quot;</span><span class="av">viewport</span><span class="tg">&quot;</span><span class="tg"> </span><span class="an">content</span><span class="tg">=&quot;</span><span class="av">width=device-width, initial-scale=1.0</span><span class="tg">&quot;</span><span class="tg"> /&gt;</span></div>
<div class="ln" style="top:341.56px">17</div>
<div class="cl" style="top:343.16px">    <span class="tg">&lt;title&gt;</span>Vite + React + TS<span class="tg">&lt;/title&gt;</span></div>
<div class="ln" style="top:354.97px">18</div>
<div class="cl" style="top:356.57px">  <span class="tg">&lt;/head&gt;</span></div>
<div class="ln" style="top:368.38px">19</div>
<div class="cl" style="top:369.98px">  <span class="tg">&lt;body&gt;</span></div>
<div class="ln" style="top:381.79px">20</div>
<div class="cl" style="top:383.39px">    <span class="cm">&lt;!-- Normal Vite React App --&gt;</span></div>
<div class="ln" style="top:395.20px">21</div>
<div class="cl" style="top:396.80px">    <span class="cm">&lt;!-- &lt;div id=&quot;root&quot;&gt;&lt;/div&gt;</span></div>
<div class="ln" style="top:408.61px">22</div>
<div class="cl" style="top:410.21px">    <span class="cm">&lt;script type=&quot;module&quot; src=&quot;/src/main.tsx&quot;&gt;&lt;/script&gt; --&gt;</span></div>
<div class="ln" style="top:422.02px">23</div>
<div class="ln" style="top:435.43px">24</div>
<div class="cl" style="top:437.03px">    <span class="cm">&lt;!-- Server-side-render React App --&gt;</span></div>
<div class="ln" style="top:448.84px">25</div>
<div class="cl" style="top:450.44px"><span class="se">    &lt;div id=&quot;root&quot;&gt;&lt;div class=&quot;min-h-screen bg-gradient-to-b from-gray-900 to-gray-800 text-gray-300 px-6 py-20&quot;&gt;&lt;div class=&quot;max-w-4xl</span></div>
<div class="ln" style="top:462.25px">26</div>
<div class="cl" style="top:463.85px"><span class="se">                         hover:bg-blue-600 transition-all duration-300 </span></div>
<div class="ln" style="top:475.66px">27</div>
<div class="cl" style="top:477.26px"><span class="se">                         transform hover:scale-105 active:scale-95 </span></div>
<div class="ln" style="top:489.07px">28</div>
<div class="cl" style="top:490.67px"><span class="se">                         shadow-lg hover:shadow-blue-500/25&quot;&gt;Try Interactive Demo&lt;/button&gt;&lt;div class=&quot;mt-4 text-2xl font-semibold&quot;&gt;Counter</span></div>
<div class="ln" style="top:502.48px">29</div>
<div class="cl" style="top:504.08px"><span class="se">    &lt;script type=&quot;module&quot; src=&quot;<u>/src/entry-client.tsx</u>&quot;&gt;&lt;/script&gt;</span></div>
<div class="ln" style="top:515.89px">30</div>
<div class="cl" style="top:517.49px">  <span class="tg">&lt;/body&gt;</span></div>
<div class="ln" style="top:529.30px">31</div>
<div class="cl" style="top:530.90px"><span class="tg">&lt;/html&gt;</span></div>
<div class="ln" style="top:542.71px">32</div>
<span class="t" style="left:1385.98px;top:139.03px;font-size:38.6px;line-height:54px;color:#ffffff;font-weight:700;transform:scaleX(0.9364);">React with (SSR)</span>
<div class="b" style="left:1552px;top:215px;width:93px;height:36px;background:#29272d;border-radius:6px;box-shadow:0 8px 18px rgba(0,0,0,.3)"></div>
<div class="b" style="left:1552px;top:215px;width:23px;height:36px;background:#2e2c33;border-radius:6px 0 0 6px"></div>
<div class="b" style="left:1561.8px;top:226.4px;width:2.6px;height:14px;background:#b9bac8;border-radius:1.300px"></div>
<svg class="i" style="left:1584px;top:225px" width="16" height="18" viewBox="0 0 16 18" fill="none" stroke="#d5d6dc" stroke-width="1.350" stroke-linecap="round"><rect x="5.600" y="1.200" width="4.800" height="9" rx="2.400"/><path d="M3 8.300a5 5 0 0 0 10 0M8 13.400v2.800"/></svg>
<svg class="i" style="left:1620px;top:231.500px" width="12" height="4" viewBox="0 0 12 4"><circle cx="2" cy="2" r="1.100" fill="#d5d6dc"/><circle cx="6" cy="2" r="1.100" fill="#d5d6dc"/><circle cx="10" cy="2" r="1.100" fill="#d5d6dc"/></svg>
<div class="b" style="left:840.5px;top:0px;width:1.5px;height:767px;background:#2a2f3a;"></div>
<div class="b" style="left:841.8px;top:0px;width:2px;height:767px;background:#486c9f;"></div>
<div class="b" style="left:843.8px;top:127px;width:1px;height:640px;background:#2f3a48;"></div>
</div>
</body>
</html>
